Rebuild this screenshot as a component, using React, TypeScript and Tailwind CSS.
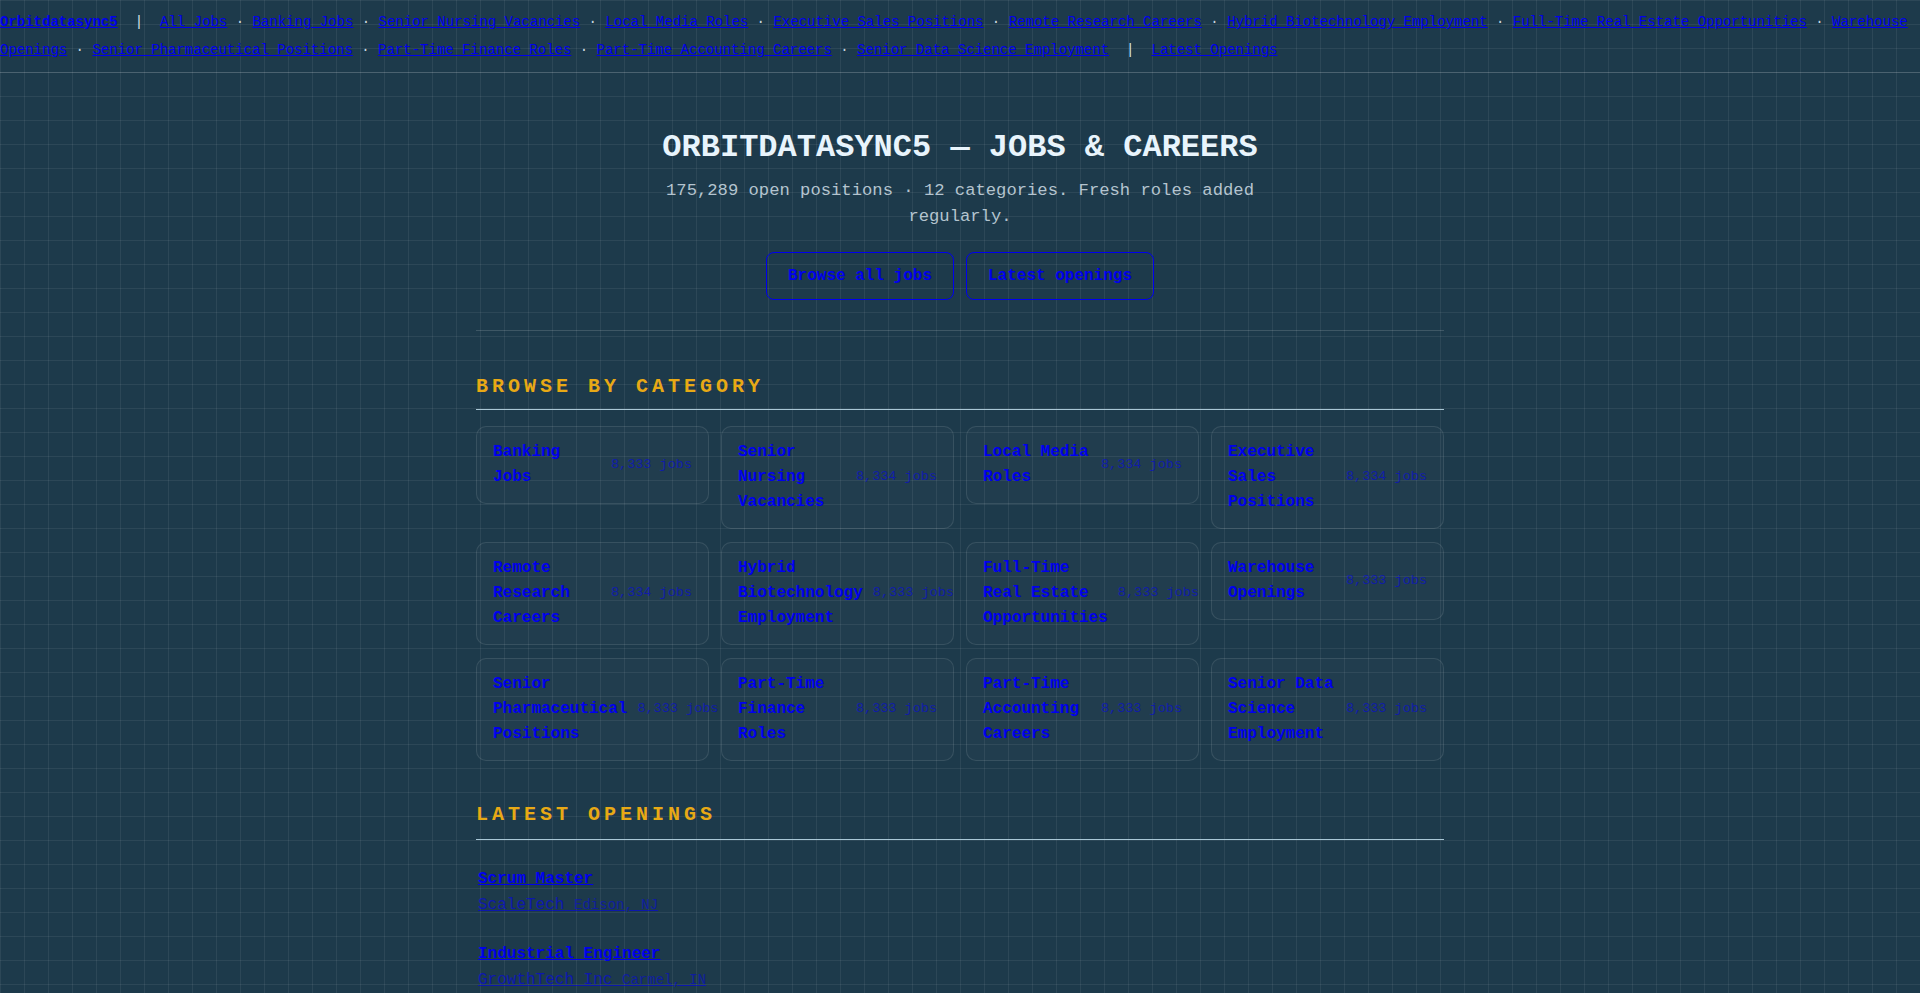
const categories = [
  { name: 'Banking Jobs', count: '8,333' },
  { name: 'Senior Nursing Vacancies', count: '8,334' },
  { name: 'Local Media Roles', count: '8,334' },
  { name: 'Executive Sales Positions', count: '8,334' },
  { name: 'Remote Research Careers', count: '8,334' },
  { name: 'Hybrid Biotechnology Employment', count: '8,333' },
  { name: 'Full-Time Real Estate Opportunities', count: '8,333' },
  { name: 'Warehouse Openings', count: '8,333' },
  { name: 'Senior Pharmaceutical Positions', count: '8,333' },
  { name: 'Part-Time Finance Roles', count: '8,333' },
  { name: 'Part-Time Accounting Careers', count: '8,333' },
  { name: 'Senior Data Science Employment', count: '8,333' },
];

const navLinks = ['All Jobs', ...categories.map((c) => c.name)];

const jobs = [
  { title: 'Scrum Master', company: 'ScaleTech', location: 'Edison, NJ' },
  { title: 'Industrial Engineer', company: 'GrowthTech Inc', location: 'Carmel, IN' },
  { title: 'Registered Nurse', company: 'CarePoint Health', location: 'Tampa, FL' },
  { title: 'Data Analyst', company: 'Northwind Labs', location: 'Austin, TX' },
];

export default function App() {
  return (
    <div className="min-h-screen bg-[#1d3a4b] bg-[linear-gradient(rgba(255,255,255,0.065)_1px,transparent_1px),linear-gradient(90deg,rgba(255,255,255,0.065)_1px,transparent_1px)] bg-[size:24px_24px] font-['Liberation_Mono',monospace] text-[#c8d6df]">
      <header className="border-b border-white/15 pt-[8px] pb-[8px] text-[14px] leading-[28px]">
        <a href="#" className="font-bold text-[#0000ee] underline">Orbitdatasync5</a>
        <span className="mx-[17px] text-[#d6e4ee]">|</span>
        {navLinks.map((link, i) => (
          <span key={link}>
            {i > 0 && <span> · </span>}
            <a href="#" className="text-[#0000ee] underline">{link}</a>
          </span>
        ))}
        <span className="mx-[17px] text-[#d6e4ee]">|</span>
        <a href="#" className="text-[#0000ee] underline">Latest Openings</a>
      </header>

      <section className="pt-14 text-center">
        <h1 className="text-[32px] leading-[38px] font-bold text-[#e8f4fc]">ORBITDATASYNC5 — JOBS &amp; CAREERS</h1>
        <p className="mx-auto mt-[11px] max-w-[600px] text-[17.2px] leading-[25.5px] text-[#b4c4cf]">
          175,289 open positions · 12 categories. Fresh roles added regularly.
        </p>
        <div className="mt-[23px] flex justify-center gap-3">
          <a href="#" className="rounded-lg border border-[#0000ee] px-[21px] py-[11px] text-[16px] leading-6 font-bold text-[#0000ee]">Browse all jobs</a>
          <a href="#" className="rounded-lg border border-[#0000ee] px-[21px] py-[11px] text-[16px] leading-6 font-bold text-[#0000ee]">Latest openings</a>
        </div>
        <div className="mx-auto mt-[30px] max-w-[968px] border-b border-white/15" />
      </section>

      <main className="mx-auto max-w-[968px] pb-12">
        <section className="pt-[42px]">
          <h2 className="border-b border-[#a9c7d6] pb-2 text-[20px] leading-[28px] font-bold tracking-[0.2em] text-[#e8a915]">BROWSE BY CATEGORY</h2>
          <div className="mt-4 grid grid-cols-4 items-start gap-x-3 gap-y-[13px]">
            {categories.map((c) => (
              <a
                key={c.name}
                href="#"
                className="flex items-center justify-between gap-2.5 rounded-[10px] border border-white/10 bg-white/[0.02] px-4 py-[13px]"
              >
                <span className="text-[16px] leading-[25px] font-bold text-[#0000ee]">{c.name}</span>
                <span className="shrink-0 whitespace-nowrap text-[13.5px] text-[#0000ee]/55">{c.count} jobs</span>
              </a>
            ))}
          </div>
        </section>

        <section className="pt-10">
          <h2 className="border-b border-[#a9c7d6] pb-[10px] text-[20px] leading-[28px] font-bold tracking-[0.2em] text-[#e8a915]">LATEST OPENINGS</h2>
          <ul className="mt-[15px]">
            {jobs.map((job) => (
              <li key={job.title} className="px-0.5 py-3">
                <a href="#" className="block text-[16px] leading-[25.6px] font-bold text-[#0000ee] underline">{job.title}</a>
                <a href="#" className="block text-[16px] leading-[25.6px] text-[#0000ee]/60 underline">
                  {job.company} <span className="text-[14px] text-[#0000ee]/50">{job.location}</span>
                </a>
              </li>
            ))}
          </ul>
        </section>
      </main>
    </div>
  );
}
